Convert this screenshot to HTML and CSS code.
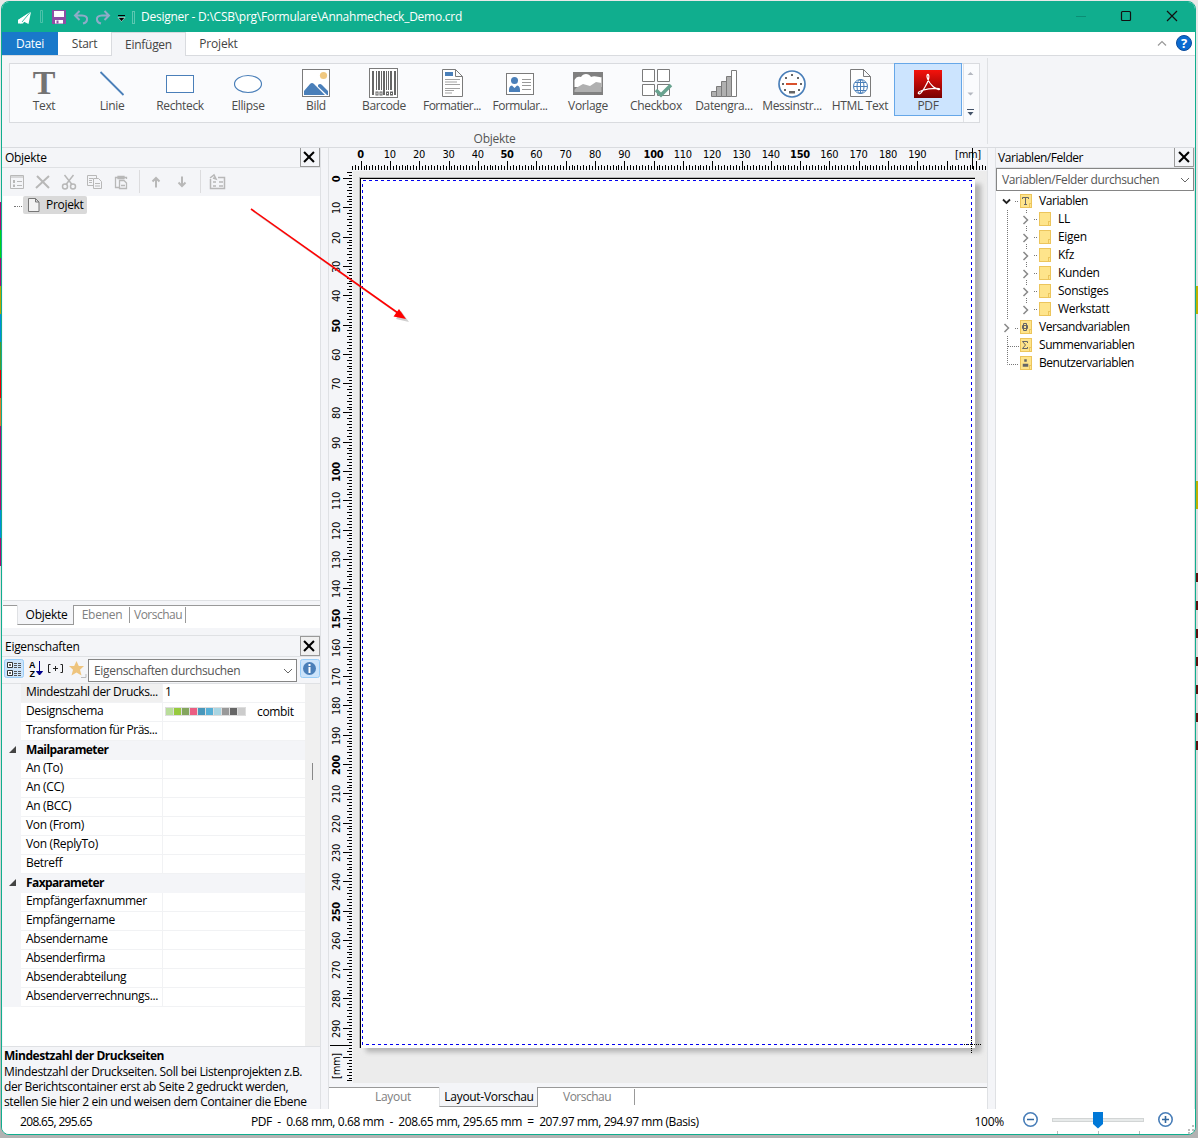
FILE: index.html
```html
<!DOCTYPE html>
<html lang="de">
<head>
<meta charset="utf-8">
<title>Designer</title>
<link rel="stylesheet" href="styles.css">
</head>
<body>
<div class="edge-left"></div>
<div class="edge-right"></div>
<main class="window">
  <header class="titlebar">
    <svg class="quick" width="130" height="30" viewBox="2 2 130 30">
      <path d="M18 20L31 12L28.500 24L23.500 21.500L20.500 24V21Z" fill="#fff"/><path d="M18 23.500H23L30 12L18 20Z" fill="#fff"/><path d="M22 22L30 12.500" stroke="#0fae8e" stroke-width=".8"/>
      <path d="M40.500 10.500H42.500V22.500H40.500Z" fill="none" stroke="#5cc7b1" stroke-width=".8"/>
      <path d="M52 10H66V24H52Z" fill="#8e4fa5"/><path d="M54 11H64V17H54ZM55 20H63V23.500H55Z" fill="#fff"/><path d="M57.500 20.500V23.500" stroke="#8e4fa5" stroke-width="2"/>
      <g fill="none" stroke="#8fabc8" stroke-width="2"><path d="M79.500 11L75 15.500L79.500 20M75.500 15.500H82C86 15.500 87.500 17.500 87 20C86.700 22 85 23 83 23.500"/><path d="M104.500 11L109 15.500L104.500 20M108.500 15.500H102C98 15.500 96.500 17.500 97 20C97.300 22 99 23 101 23.500"/></g>
      <path d="M118 15.500H125" stroke="#000"/><path d="M118 17.500H125L121.500 21.500Z" fill="#000" stroke="#fff" stroke-width=".5"/>
    </svg>
    <span class="divider"></span>
    <h1>Designer - D:\CSB\prg\Formulare\Annahmecheck_Demo.crd</h1>
    <svg class="caption" width="120" height="30" viewBox="1075 2 120 30" fill="none" stroke="#111">
      <path d="M1076 16.500H1086" stroke="#0b8e75"/><rect x="1121.500" y="11.500" width="9" height="9" rx="1" stroke-width="1.200"/><path d="M1167 11L1177 21M1177 11L1167 21" stroke-width="1.200"/>
    </svg>
  </header>
  <nav class="tabs">
    <span class="tab file">Datei</span><span class="tab start">Start</span><span class="tab active">Einfügen</span><span class="tab proj">Projekt</span>
    <svg class="help" width="42" height="23" viewBox="1153 32 42 23"><path d="M1158 45.500L1162 41.500L1166 45.500" fill="none" stroke="#999" stroke-width="1.200"/><circle cx="1184" cy="43" r="7.500" fill="#0a6ad0" stroke="#0b4b9b"/><text x="1184" y="48" text-anchor="middle" font-size="13" font-weight="700" fill="#fff">?</text></svg>
  </nav>
  <section class="ribbon">
    <div class="group">
      <div class="gallery">
        <div class="item"><svg viewBox="0 0 30 30"><text x="15" y="26" class="bigt">T</text></svg><span>Text</span></div>
        <div class="item"><svg viewBox="0 0 30 30"><path d="M3.500 4L26.500 27" stroke="#4a7fb9" stroke-width="1.800"/></svg><span>Linie</span></div>
        <div class="item"><svg viewBox="0 0 30 30"><rect x="1.500" y="7.500" width="27" height="17" fill="#fff" stroke="#4a7fb9"/></svg><span>Rechteck</span></div>
        <div class="item"><svg viewBox="0 0 30 30"><ellipse cx="15" cy="16" rx="13.500" ry="8.500" fill="#fff" stroke="#4a7fb9" stroke-width="1.200"/></svg><span>Ellipse</span></div>
        <div class="item"><svg viewBox="0 0 30 30"><rect x="1.500" y="1.500" width="27" height="27" fill="#fff" stroke="#7b7b7b"/><circle cx="22.500" cy="7.500" r="3.600" fill="#f0c880"/><path d="M3 27V23L9 16Q11 14 13 16L24 27ZM17 17Q19 15 21 17L27 23V27H26L17 18.500Z" fill="#4a7fb9"/></svg><span>Bild</span></div>
        <div class="item"><svg viewBox="0 0 30 30"><rect x=".5" y=".5" width="28" height="29" fill="#fff" stroke="#7b7b7b"/><g fill="#666"><path d="M3 3H5V27H3ZM7 3H8V22H7ZM9 3H11V22H9ZM12 3H13V22H12ZM14 3H16V27H14ZM17 3H18V22H17ZM19 3H20V22H19ZM21 3H23V22H21ZM25 3H27V27H25Z"/></g><g fill="none" stroke="#666"><rect x="7" y="24" width="2" height="3"/><rect x="11" y="24" width="2" height="3"/><rect x="17.500" y="24" width="2" height="3"/><rect x="21.500" y="24" width="2" height="3"/></g></svg><span>Barcode</span></div>
        <div class="item"><svg viewBox="0 0 30 30"><path d="M5.500 1.500H18.500L25.500 8.500V28.500H5.500ZM18.500 1.500V8.500H25.500" fill="#fff" stroke="#7b7b7b"/><path d="M8 4H16V8H8Z" fill="#4a7fb9"/><path d="M8 11.500H23M8 14H20M8 16.500H23M8 20.500H23M8 22.500H17M8 25H15" stroke="#999" stroke-width=".9"/></svg><span>Formatier...</span></div>
        <div class="item"><svg viewBox="0 0 30 30"><rect x="1.500" y="5.500" width="27" height="21" fill="#fff" stroke="#7b7b7b"/><circle cx="9.500" cy="12.500" r="3.500" fill="#4a7fb9"/><path d="M4 24Q3.500 17.500 7 17.500L9.500 20L12 17.500Q15.500 17.500 15 24Z" fill="#4a7fb9"/><path d="M17 11.500H26M17 14.500H26M17 17.500H26M17 21.500H26" stroke="#999"/></svg><span>Formular...</span></div>
        <div class="item"><svg viewBox="0 0 30 30"><path d="M0 4H30V27H0Z" fill="#808080"/><path d="M1.500 19V12C3 9 5 8 8 9C10 5 16 5 18 9C22 7 27 10 28.500 9V19Z" fill="#fff"/><path d="M1.500 22L3 20L10 16L17 18L23 14L28.500 15V24H1.500Z" fill="#b0b0b0"/></svg><span>Vorlage</span></div>
        <div class="item"><svg viewBox="0 0 30 30"><g fill="#fff" stroke="#7b7b7b"><path d="M1.500 1.500H13.500V13.500H1.500ZM16.500 1.500H28.500V13.500H16.500ZM1.500 16.500H13.500V27.500H1.500ZM16.500 16.500H28.500V27.500H16.500Z"/></g><path d="M15 22L20 27L30 17" fill="none" stroke="#68a28f" stroke-width="3.500"/></svg><span>Checkbox</span></div>
        <div class="item"><svg viewBox="0 0 30 30"><path d="M2.500 23.500H7.500V28.500H2.500ZM7.500 18.500H12.500V28.500H7.500ZM12.500 13.500H17.500V28.500H12.500ZM17.500 8.500H22.500V28.500H17.500Z" fill="#b0b0b0" stroke="#7b7b7b"/><path d="M22.500 2.500H27.500V28.500H22.500Z" fill="#fff" stroke="#7b7b7b"/></svg><span>Datengra...</span></div>
        <div class="item"><svg viewBox="0 0 30 30"><circle cx="15" cy="16" r="13" fill="#fff" stroke="#4a7fb9" stroke-width="1.700"/><path d="M9 16H20" stroke="#d9512c" stroke-width="2"/><path d="M12 23H18V25.500H12Z" fill="#666"/><g fill="#666"><path d="M14 6H16V8H14ZM8 9H10V11H8ZM20 9H22V11H20ZM5 15H7V17H5ZM23 15H25V17H23ZM7 21H9V23H7ZM21 21H23V23H21Z"/></g></svg><span>Messinstr...</span></div>
        <div class="item"><svg viewBox="0 0 30 30"><path d="M5.500 1.500H18.500L25.500 8.500V28.500H5.500ZM18.500 1.500V8.500H25.500" fill="#fff" stroke="#7b7b7b"/><g fill="none" stroke="#4a7fb9"><circle cx="15.500" cy="18.500" r="7"/><ellipse cx="15.500" cy="18.500" rx="3.500" ry="7"/><path d="M15.500 11.500V25.500M8.500 18.500H22.500M10 14.500H21M10 22.500H21"/></g></svg><span>HTML Text</span></div>
        <div class="item selected"><svg viewBox="0 0 30 30"><defs><linearGradient id="pdf" x2="0" y2="1"><stop stop-color="#f5120c"/><stop offset="1" stop-color="#780000"/></linearGradient></defs><path d="M1 2H29V30H1Z" fill="url(#pdf)"/><path d="M5.500 25.500C4 24 11 20 26 20.500C28 21.500 25 23 20 18.500C15 14 13 8 14.500 6.500C17 6 16 13 12 19C9 24.500 6.500 27 5.500 25.500Z" fill="none" stroke="#fff" stroke-width="1.200"/></svg><span>PDF</span></div>
        <svg class="scroller" width="17" height="58" viewBox="962 64 17 58"><path d="M963.500 64V122" stroke="#e0e2e6"/><path d="M967.500 75H973.500L970.500 72ZM967.500 92.500H973.500L970.500 95.500Z" fill="#b4b8c0"/><path d="M967 109.500H974" stroke="#44546a"/><path d="M967.500 112H973.500L970.500 115.500Z" fill="#44546a"/></svg>
      </div>
      <div class="group-label">Objekte</div>
    </div>
  </section>
  <section class="workspace">
    <aside class="left">
      <div class="panel-head"><span>Objekte</span><i class="close"></i></div>
      <svg class="objtools" width="318" height="28" viewBox="3 168 318 28" fill="none" stroke="#b8b8b8">
        <path d="M10.500 175.500H23.500V188.500H10.500ZM10.500 177H23.500M17 181.500H22M17 185.500H22" /><path d="M13 180H15V183H13ZM13 184.500H15V187H13Z" fill="#b8b8b8" stroke="none"/>
        <path d="M37 176L49 188M49 176L36 188" stroke-width="2"/>
        <path d="M64.500 175L72 184.500M73.500 175L66 184.500" stroke-width="1.500"/><circle cx="65" cy="186.500" r="2.500" stroke-width="1.500"/><circle cx="73" cy="186.500" r="2.500" stroke-width="1.500"/>
        <path d="M93 185.500H87.500V175.500H96.500V178M89 178.500H93M89 180.500H92M89 182.500H92M93.500 178.500H98.500L101.500 181.500V188.500H93.500ZM95 183.500H100M95 186H100"/>
        <path d="M119 187.500H115.500V177.500H126.500V179M118 176.500H124V178.500H118ZM119.500 180.500H124L126.500 183V188.500H119.500ZM121 185.500H125" stroke-width="1.300"/>
        <path d="M139.500 170V193M200.500 170V193" stroke="#dcdcde"/>
        <path d="M156 187.500V178M152.500 181.500L156 178L159.500 181.500M182 176.500V186M178.500 182.500L182 186L185.500 182.500" stroke-width="2"/>
        <path d="M210.500 179V188.500H224.500V177.500H218M210 178L214 175L216 179L213 178M213 182H216M213 186H216M219 182H223M219 186H223" stroke-width="1.500"/>
      </svg>
      <div class="object-tree"><span class="dots"></span><span class="node"><svg width="12" height="14"><path d="M.5.500H7.500L11 4V13.500H.5ZM7.500.500V4H11" fill="#f2f2f2" stroke="#777"/></svg>Projekt</span></div>
      <div class="tabs-bottom left-tabs"><span class="lead"></span><span class="bt on">Objekte</span><span class="bt eb">Ebenen</span><span class="bt vo">Vorschau</span></div>
      <div class="gap"></div>
      <div class="panel-head props"><span>Eigenschaften</span><i class="close"></i></div>
      <div class="prop-tools">
        <svg width="86" height="26" viewBox="3 657 86 26"><rect x="4.500" y="659.500" width="19" height="18" rx="2" fill="#cce4fb" stroke="#99cdf7"/><g fill="#fff" stroke="#333"><path d="M7.500 662.500H12.500V667.500H7.500ZM7.500 670.500H12.500V675.500H7.500Z"/><path d="M9 665H11M10 664V666M9 673H11M10 672V674"/></g><path d="M14 663.500H21M14 665.500H21M14 667.500H21M14 671.500H21M14 673.500H21M14 675.500H21" stroke="#555" stroke-dasharray="3 1"/>
        <text x="29" y="668" class="az">A</text><text x="29.500" y="677" class="az">Z</text><path d="M39.500 661V675M36.500 671.500L39.500 675L42.500 671.500Z" fill="#00008c" stroke="#00008c"/>
        <path d="M50.500 664.500H48.500V672.500H50.500M60.500 664.500H62.500V672.500H60.500M53 668.500H58M55.500 666V671" fill="none" stroke="#222"/>
        <path d="M76.500 661L78.800 666H84L80 669.800L81.500 675.500L76.500 672.500L71.500 675.500L73 669.800L69 666H74.200Z" fill="#eec47d"/><path d="M86 674V677.500H81" fill="none" stroke="#bbb"/></svg>
        <div class="search">Eigenschaften durchsuchen<svg width="10" height="6"><path d="M1 1L5 5L9 1" fill="none" stroke="#666"/></svg></div>
        <svg width="20" height="20" viewBox="300 659 20 20"><rect x=".5" y=".5" transform="translate(300 659)" width="19" height="18" rx="2" fill="#cce4fb" stroke="#99cdf7"/><circle cx="309.500" cy="668.500" r="6.500" fill="#4a7fb9"/><path d="M309.500 664V666M309.500 667V673" stroke="#fff" stroke-width="2"/></svg>
      </div>
      <div class="prop-wrap">
        <div class="prop-table">
          <div class="row sel"><i></i><b>Mindestzahl der Drucks...</b><em>1</em></div>
          <div class="row"><i></i><b>Designschema</b><em><span class="swatches"><s class="c1"></s><s class="c2"></s><s class="c3"></s><s class="c4"></s><s class="c5"></s><s class="c6"></s><s class="c7"></s><s class="c8"></s><s class="c9"></s><s class="c10"></s></span>combit</em></div>
          <div class="row"><i></i><b>Transformation für Präs...</b><em></em></div>
          <div class="row head"><i><u></u></i><b>Mailparameter</b></div>
          <div class="row"><i></i><b>An (To)</b><em></em></div>
          <div class="row"><i></i><b>An (CC)</b><em></em></div>
          <div class="row"><i></i><b>An (BCC)</b><em></em></div>
          <div class="row"><i></i><b>Von (From)</b><em></em></div>
          <div class="row"><i></i><b>Von (ReplyTo)</b><em></em></div>
          <div class="row"><i></i><b>Betreff</b><em></em></div>
          <div class="row head"><i><u></u></i><b>Faxparameter</b></div>
          <div class="row"><i></i><b>Empfängerfaxnummer</b><em></em></div>
          <div class="row"><i></i><b>Empfängername</b><em></em></div>
          <div class="row"><i></i><b>Absendername</b><em></em></div>
          <div class="row"><i></i><b>Absenderfirma</b><em></em></div>
          <div class="row"><i></i><b>Absenderabteilung</b><em></em></div>
          <div class="row"><i></i><b>Absenderverrechnungs...</b><em></em></div>
        </div>
        <div class="scroll"><span></span></div>
      </div>
      <div class="description"><strong>Mindestzahl der Druckseiten</strong><p>Mindestzahl der Druckseiten. Soll bei Listenprojekten z.B.<br>der Berichtscontainer erst ab Seite 2 gedruckt werden,<br>stellen Sie hier 2 ein und weisen dem Container die Ebene</p></div>
    </aside>
    <div></div>
    <section class="center">
      <svg id="canvas" width="658" height="935" viewBox="329 148 658 935">
        <defs><filter id="blur" x="-5%" y="-5%" width="110%" height="110%"><feGaussianBlur stdDeviation="2.500"/></filter></defs>
        <rect x="353" y="171" width="634" height="912" fill="#ececec"/>
        <rect x="366" y="184" width="615" height="868" fill="#b2b2b2" filter="url(#blur)"/>
        <rect x="359" y="177" width="616" height="871" fill="#b8b8b8"/>
        <rect x="360" y="178" width="615" height="870" fill="#000"/>
        <rect x="361" y="179" width="614" height="869" fill="#fff"/>
        <path d="M362.500 180.500H971.500V1044.500H362.500Z" fill="none" stroke="#0000f0" stroke-dasharray="3 3" shape-rendering="crispEdges"/>
        <path d="M964 1044.500H981M971.500 1036V1053" stroke="#000" stroke-dasharray="1 1"/>
        <g id="ruler" shape-rendering="crispEdges" fill="#000"></g>
      </svg>
      <div class="tabs-bottom center-tabs"><span class="bt la">Layout</span><span class="bt on lv">Layout-Vorschau</span><span class="bt vs">Vorschau</span></div>
    </section>
    <div></div>
    <aside class="right">
      <div class="panel-head"><span>Variablen/Felder</span><i class="close"></i></div>
      <div class="search">Variablen/Felder durchsuchen<svg width="10" height="6"><path d="M1 1L5 5L9 1" fill="none" stroke="#666"/></svg></div>
      <div class="vars">
        <svg class="tree-lines" width="60" height="180" viewBox="996 192 60 180" fill="none">
          <path d="M1015 201.500H1019M1034 219.500H1038M1034 237.500H1038M1034 255.500H1038M1034 273.500H1038M1034 291.500H1038M1034 309.500H1038M1015 328.500H1019M1007.500 210V320M1007.500 336V364.500H1019M1008 346.500H1019M1026.500 210V306" stroke="#777" stroke-dasharray="1 1"/>
          <path d="M1023 213H1030V225H1023ZM1023 231H1030V243H1023ZM1023 249H1030V261H1023ZM1023 267H1030V279H1023ZM1023 285H1030V297H1023ZM1023 303H1030V317H1023Z" fill="#fff"/>
          <path d="M1003 199.500L1006.500 203L1010 199.500" stroke="#222" stroke-width="1.800"/>
          <path d="M1023.500 216L1027.500 220L1023.500 224M1023.500 234L1027.500 238L1023.500 242M1023.500 252L1027.500 256L1023.500 260M1023.500 270L1027.500 274L1023.500 278M1023.500 288L1027.500 292L1023.500 296M1023.500 306L1027.500 310L1023.500 314M1004.500 324L1008.500 328L1004.500 332" stroke="#888" stroke-width="1.500"/>
        </svg>
        <div class="var"><span class="folder"><svg viewBox="0 0 12 14"><path d="M2.500 5V3.500H8.500V5M5.500 3.500V10.500M4 10.500H7"/></svg></span>Variablen</div>
        <div class="var sub"><span class="folder"></span>LL</div>
        <div class="var sub"><span class="folder"></span>Eigen</div>
        <div class="var sub"><span class="folder"></span>Kfz</div>
        <div class="var sub"><span class="folder"></span>Kunden</div>
        <div class="var sub"><span class="folder"></span>Sonstiges</div>
        <div class="var sub"><span class="folder"></span>Werkstatt</div>
        <div class="var"><span class="folder"><svg viewBox="0 0 12 14"><path d="M2.500 5.500H7.500V8.500H2.500ZM3.500 3.500H6.500V10.500H3.500Z"/></svg></span>Versandvariablen</div>
        <div class="var"><span class="folder"><svg viewBox="0 0 12 14"><path d="M7.500 5V3.500H2.500L5.500 7L2.500 10.500H7.500V9"/></svg></span>Summenvariablen</div>
        <div class="var"><span class="folder"><svg viewBox="0 0 12 14"><path d="M5 4H6V5H5ZM3.500 8.500H7.500V10H3.500Z" stroke-width="1.500"/></svg></span>Benutzervariablen</div>
      </div>
    </aside>
  </section>
  <footer class="status">
    <span class="pos">208.65, 295.65</span><span class="info">PDF&nbsp; -&nbsp; 0.68 mm, 0.68 mm&nbsp; -&nbsp; 208.65 mm, 295.65 mm&nbsp; =&nbsp; 207.97 mm, 294.97 mm (Basis)</span><span class="zoom">100%</span>
    <svg width="180" height="24" viewBox="1015 1110 180 24"><g fill="#fff" stroke="#4a7fb9" stroke-width="1.600"><circle cx="1030.500" cy="1119.500" r="6.700"/><circle cx="1165.500" cy="1119.500" r="6.700"/></g><path d="M1027 1119.500H1034M1162 1119.500H1169M1165.500 1116V1123" stroke="#33689f" stroke-width="1.600"/><rect x="1052.500" y="1118.500" width="91" height="3" fill="#e7eaea" stroke="#d2d5d5"/><path d="M1093 1112H1103V1124L1098 1128.500L1093 1124Z" fill="#0078d7"/><path d="M1057.500 1131V1134M1098.500 1131V1134M1139.500 1131V1134" stroke="#bbb"/><path d="M1192 1125h2v2h-2zM1192 1129h2v2h-2zM1188 1129h2v2h-2zM1188 1132h2v2h-2zM1192 1132h2v2h-2z" fill="#bbb"/></svg>
  </footer>
</main>
<svg class="annotation" width="170" height="125" viewBox="245 203 170 125"><g opacity=".35" transform="translate(2 2)"><path d="M251 209L398 313" stroke="#777" stroke-width="1.500"/><path d="M407 320L394 317L399 309Z" fill="#777"/></g><path d="M251 209L398 313" stroke="#f00" stroke-width="1.600"/><path d="M406 319L393.500 316.500L399 309Z" fill="#f00"/></svg>
<script src="script.js"></script>
</body>
</html>
```
FILE: styles.css
```css
* { box-sizing: border-box; }
body { margin: 0; width: 1198px; height: 1138px; overflow: hidden; padding: 1px 2px 3px 1px; background: linear-gradient(#e9e9e9 0, #dcdcdc 70%, #b2b2b2 99%); font: 12px/16px "Open Sans", "Noto Sans", sans-serif; letter-spacing: -.28px; color: #000; }
.edge-left { position: absolute; left: 0; top: 202px; width: 1px; height: 364px; background: linear-gradient(#a50d72 28px, #00d419 28px 56px, #a50d72 56px 84px, #b7a400 84px 112px, #008cdc 112px 140px, #4f982c 140px 168px, #e80000 168px 196px, #e07a28 196px 224px, #a50d72 224px 308px, #008cdc 308px 336px, #a50d72 336px); }
.edge-right { position: absolute; right: 0; top: 286px; width: 2px; height: 468px; background: repeating-linear-gradient(#601010 0 9px, transparent 9px 28px) 0 287px / 2px 181px no-repeat, linear-gradient(#c0b000 28px, transparent 28px 195px, #c0b000 195px 223px, transparent 223px); }
.window { position: relative; width: 1195px; height: 1134px; border: 1px solid #10ae8e; border-radius: 8px; overflow: hidden; display: flex; flex-direction: column; background: #f4f5f8; }
.titlebar { height: 30px; background: #10ae8e; display: flex; align-items: center; color: #fff; flex: none; }
.divider { width: 3px; height: 13px; border: 1px solid #5cc7b1; }
.titlebar h1 { margin: 0 0 0 6px; font-size: 12px; font-weight: 400; flex: 1; letter-spacing: -.25px; }
.tabs { height: 24px; flex: none; background: #fff; border-bottom: 1px solid #d9dbdf; display: flex; color: #444; }
.tab { height: 24px; line-height: 24px; text-align: center; }
.file { width: 56px; background: #1979ca; color: #fff; height: 23px; }
.start { width: 53px; }
.active { width: 75px; background: #f4f5f8; border: 1px solid #d9dbdf; border-bottom: 0; line-height: 23px; }
.proj { width: 65px; letter-spacing: -.18px; }
.help { margin-left: auto; }
.ribbon { height: 92px; flex: none; border-bottom: 1px solid #d9dbdf; padding-top: 2px; color: #555; }
.group { width: 986px; height: 86px; border-right: 1px solid #dfe1e4; padding: 5px 0 0 7px; }
.gallery { display: flex; width: 971px; height: 60px; background: #fafbfd; border: 1px solid #d9dbdf; }
.item { width: 68px; height: 53px; margin-top: -1px; padding-top: 5px; display: flex; flex-direction: column; align-items: center; flex: none; }
.item svg { width: 30px; height: 30px; flex: none; overflow: visible; }
.item span { line-height: 16px; white-space: nowrap; color: #4b4b4b; letter-spacing: -.35px; }
.item:nth-child(7) span, .item:nth-child(8) span { letter-spacing: -.55px; }
.item.selected { background: #cce4fe; border: 1px solid #66a7e8; padding-top: 4px; }
.bigt { font: 700 34px "Liberation Serif", serif; fill: #737373; text-anchor: middle; }
.scroller { margin-left: auto; }
.group-label { text-align: center; padding: 8px 7px 0 0; line-height: 16px; }
.workspace { height: 961px; flex: none; display: grid; grid-template-columns: 319px 7px 660px 7px 1fr; }
.left { border-right: 1px solid #dfe1e4; display: flex; flex-direction: column; min-width: 0; }
.panel-head { height: 20px; flex: none; display: flex; justify-content: space-between; border-bottom: 1px solid #dfe1e4; padding-left: 3px; line-height: 20px; }
.close { width: 20px; height: 19px; border: 1px solid #999; border-top: 0; position: relative; }
.close::before, .close::after { content: ""; position: absolute; left: 1.5px; top: 7.5px; width: 14px; height: 2px; background: #000; transform: rotate(45deg); }
.close::after { transform: rotate(-45deg); }
.left .close::before, .left .close::after { left: 1px; }
.objtools { flex: none; margin-left: 1px; }
.object-tree { height: 405px; flex: none; margin-left: 1px; background: #fff; border-bottom: 1px solid #dfe1e4; display: flex; align-items: flex-start; padding-left: 11px; }
.dots { width: 10px; margin-top: 10px; border-top: 1px dotted #777; }
.node { height: 18px; background: #d9d9d9; border-radius: 2px; display: flex; align-items: center; gap: 6px; padding: 0 0 0 5px; width: 64px; margin-left: -1px; letter-spacing: -.3px; }
.tabs-bottom { display: flex; background: #fff; color: #808080; }
.left-tabs { margin: 4px 0 0 1px; height: 23px; flex: none; }
.bt { height: 23px; line-height: 18px; text-align: center; border-top: 1px solid #999; }
.lead { width: 14px; border-top: 1px solid #999; }
.bt.on { height: 20px; background: #f4f5f8; color: #000; border: 1px solid #999; border-top: 0; border-left-color: #dfe1e4; line-height: 20px; }
.left-tabs .on { width: 57px; padding-left: 2px; }
.eb { width: 56px; position: relative; }
.vo { flex: 1; text-align: left; padding-left: 4px; position: relative; letter-spacing: -.5px; }
.eb::after, .vo::after, .vs::after { content: ""; position: absolute; width: 1px; height: 16px; top: 1px; background: #999; right: 0; }
.vo::after { left: 55px; }
.gap { height: 7px; flex: none; }
.props { border-top: 1px solid #dfe1e4; height: 22px; line-height: 22px; }
.props .close { height: 20px; border-top: 1px solid #999; background: #f0f0f0; }
.prop-tools { height: 27px; flex: none; display: flex; border-bottom: 1px solid #dfe1e4; padding-left: 1px; align-items: flex-start; }
.prop-tools > svg:last-child { margin: 2px 0 0 2px; }
.search { height: 23px; border: 1px solid #858585; background: #fff; display: flex; justify-content: space-between; align-items: center; padding: 0 4px; color: #555; flex: 1; white-space: nowrap; letter-spacing: -.32px; }
.prop-tools .search { margin: 2px 1px 0 -1px; padding: 0 3px 0 5px; }
.prop-wrap { height: 362px; flex: none; display: flex; margin-left: 1px; background: #fff; letter-spacing: -.34px; }
.prop-table { width: 302px; }
.row { height: 19px; display: grid; grid-template-columns: 18px 141px 1fr; }
.row i, .row.head { background: #f4f5f8; }
.row b { font-weight: 400; padding-left: 5px; border-bottom: 1px solid #f1f2f4; line-height: 16px; white-space: nowrap; }
.row em { font-style: normal; border-left: 1px solid #f1f2f4; border-bottom: 1px solid #f1f2f4; padding-left: 2px; line-height: 16px; display: flex; align-items: flex-start; }
.row.head b { font-weight: 700; line-height: 18px; border: 0; letter-spacing: -.6px; }
.row.sel b { background: #f0f0f0; letter-spacing: -.38px; }
.row:nth-child(2) em { line-height: 17px; }
.row:nth-child(3) b { letter-spacing: -.48px; }
.row u { display: block; margin: 5px 0 0 6px; border-left: 7px solid transparent; border-bottom: 7px solid #444; width: 0; }
.swatches { display: flex; gap: 1px; width: 81px; padding: 1px 0 1px 1px; margin: 4px 11px 0 0; background: #ddd; }
.swatches s { width: 7px; height: 7px; }
.c1 { background: #b9dd9b; } .c2 { background: #97ca3e; } .c3 { background: #84a55e; } .c4 { background: #eb5e82; } .c5 { background: #4897bb; } .c6 { background: #56afd6; } .c7 { background: #a9d5e2; } .c8 { background: #999; } .c9 { background: #666; } .c10 { background: #ccc; }
.scroll { flex: 1; background: #f0f0f0; }
.scroll span { display: block; width: 1px; height: 17px; margin: 79px 0 0 7px; background: #888; }
.description { flex: 1; border-top: 1px solid #dfe1e4; border-bottom: 1px solid #dfe1e4; padding: 0 2px; line-height: 15px; white-space: nowrap; letter-spacing: -.37px; }
.description strong { line-height: 17px; display: block; letter-spacing: -.46px; }
.description p { margin: 0; }
.center { border: solid #dfe1e4; border-width: 0 1px 1px; display: flex; flex-direction: column; }
#canvas { flex: none; }
#ruler text { font: 11px "DejaVu Sans Condensed", sans-serif; letter-spacing: -.3px; text-anchor: middle; }
#ruler .strong { font-weight: 700; }
.center-tabs { margin-top: 4px; flex: 1; }
.la { width: 110px; padding-left: 18px; }
.lv { width: 99px; letter-spacing: -.3px; padding-left: 1px; }
.vs { flex: 1; text-align: left; padding-left: 25px; position: relative; letter-spacing: -.5px; }
.vs::after { left: 96px; }
.right { display: flex; flex-direction: column; border: solid #dfe1e4; border-width: 0 1px 1px; }
.right .panel-head { padding: 0 0 0 2px; letter-spacing: -.45px; }
.right .search { margin: 0; flex: none; padding: 0 3px 0 5px; letter-spacing: -.4px; }
.vars { background: #fff; flex: 1; padding-top: 1px; position: relative; }
.tree-lines { position: absolute; left: 0; top: 1px; }
.var { height: 18px; display: flex; align-items: center; gap: 7px; padding-left: 24px; letter-spacing: -.44px; }
.var.sub { padding-left: 43px; letter-spacing: -.32px; }
.folder { position: relative; width: 12px; height: 14px; background: #fee48b; border: 1px solid #ecc55c; }
.folder::after { content: ""; box-sizing: border-box; position: absolute; right: -1px; bottom: -1px; width: 3px; height: 5px; border: 1px solid #ecc55c; }
.folder svg { position: absolute; left: -1px; top: -1px; width: 12px; height: 14px; fill: none; stroke: #666; }
.status { height: 25px; flex: none; background: #fff; display: flex; align-items: center; white-space: nowrap; letter-spacing: -.41px; }
.pos { width: 231px; padding-left: 18px; letter-spacing: -.66px; }
.info { margin-left: 18px; flex: 1; }
.zoom { margin-right: 11px; letter-spacing: -.22px; }
.az { font: 700 9px "Liberation Sans", sans-serif; }
.annotation { position: absolute; left: 245px; top: 203px; }
```
FILE: script.js
```js
const ruler = document.getElementById('ruler');
const NS = 'http://www.w3.org/2000/svg';
const STEP = 2.93;

function add(tag, attrs, text) {
  const el = document.createElementNS(NS, tag);
  for (const key in attrs) el.setAttribute(key, attrs[key]);
  if (text !== undefined) el.textContent = text;
  ruler.appendChild(el);
}

function tickLength(mm, even, odd) {
  if (mm % 10 === 0) return even + 4;
  return mm % 2 === 0 ? even : odd;
}

for (let mm = -3; mm <= 213; mm++) {
  const h = tickLength(mm, 5, 4);
  add('rect', { x: Math.round(360.6 + mm * STEP), y: 170 - h, width: 1, height: h });
  if (mm >= 0 && mm % 10 === 0 && mm < 200)
    add('text', { x: 360.5 + mm * STEP, y: 158, class: mm % 50 ? '' : 'strong' }, mm);
}
for (let mm = -2; mm <= 308; mm++) {
  const w = tickLength(mm, 5, 3);
  const y = Math.round(178 + mm * STEP);
  add('rect', { x: 352 - w, y, width: w, height: 1 });
  if (mm >= 0 && mm % 10 === 0 && mm < 300)
    add('text', { transform: `translate(340 ${y + 1}) rotate(-90)`, class: mm % 50 ? '' : 'strong' }, mm);
}
add('text', { x: 968, y: 158 }, '[mm]');
add('text', { transform: 'translate(340 1066) rotate(-90)' }, '[mm]');
add('rect', { x: 972, y: 148, width: 1, height: 21 });
add('rect', { x: 330, y: 1045, width: 17, height: 1 });
```
